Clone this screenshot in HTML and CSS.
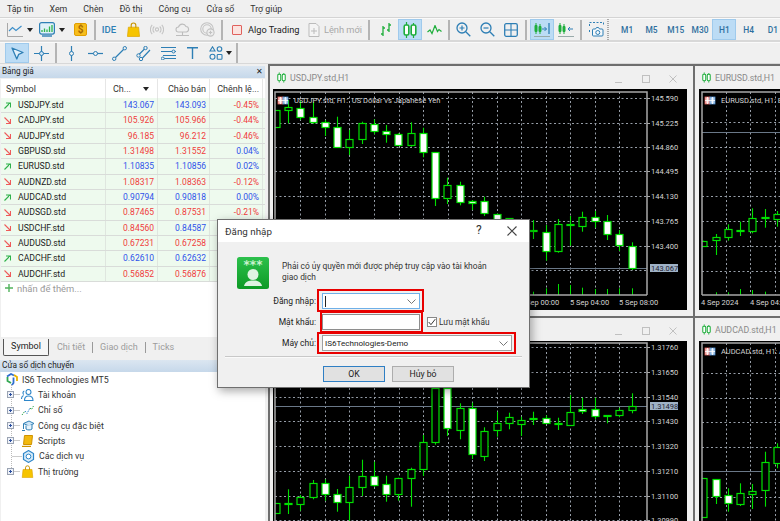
FILE: index.html
```html
<!doctype html>
<html lang="vi">
<head>
    <meta charset="utf-8">
    <title>MetaTrader 5</title>
    <link rel="stylesheet" href="styles.css">
</head>
<body>
    <svg class="defs" width="0" height="0">
        <symbol id="candles" viewBox="0 0 14 16">
            <path d="M3.5 0v16M10.5 1v15" stroke="#1fae3c" stroke-width="1.2"/>
            <rect x="1.2" y="3" width="4.6" height="10" rx="1.5" fill="#fff" stroke="#1fae3c" stroke-width="1.6"/>
            <rect x="8.2" y="3" width="4.6" height="10" rx="1.5" fill="#fff" stroke="#1fae3c" stroke-width="1.6"/>
        </symbol>
        <symbol id="bag" viewBox="0 0 14 16">
            <path d="M1.5 5.5h11l1 10H.5z" fill="#f6c400" stroke="#dfa600" stroke-width=".8"/>
            <path d="M4.5 6V3.5a2.5 2.5 0 0 1 5 0V6" fill="none" stroke="#c79300" stroke-width="1.2"/>
        </symbol>
        <symbol id="expand" viewBox="0 0 7 7">
            <rect x=".5" y=".5" width="6" height="6" fill="#eef2fa" stroke="#9aa3b2"/>
            <path d="M2 3.5h3M3.5 2v3" stroke="#2b4f9e"/>
        </symbol>
    </svg>

    <!-- thanh menu -->
    <nav class="menu">
        <span>Tập tin</span><span>Xem</span><span>Chèn</span><span>Đồ thị</span><span>Công cụ</span><span>Cửa sổ</span><span>Trợ giúp</span>
    </nav>

    <!-- thanh công cụ 1 -->
    <div class="toolbar">
        <span class="tb w20 first"><svg width="16" height="14" viewBox="0 0 16 14"><path d="M.5 0v13.5H16" fill="none" stroke="#a8a8a8"/><path d="M2 8l3.500-3.500 3.500 3 5.500-4.500" fill="none" stroke="#3d8fca" stroke-width="1.200"/></svg></span>
        <span class="tb w10"><i class="caret"></i></span>
        <span class="tb w20 gap2"><svg width="16" height="15" viewBox="0 0 16 15"><rect x=".6" y=".6" width="14.800" height="11.500" rx="2" fill="#dff0f8" stroke="#2e7fb5" stroke-width="1.200"/><path d="M3 10V8M5.500 10V6.500M8 10V7.500M10.500 10V4.500M13 10V3" stroke="#2fb44a" stroke-width="1.300"/><path d="M3 14h10" stroke="#2e7fb5" stroke-width="1.400"/></svg></span>
        <span class="tb w10"><i class="caret"></i></span>
        <span class="tb w24 gap1"><svg width="13" height="13" viewBox="0 0 13 13"><rect x=".5" y=".5" width="12" height="12" rx="1.500" fill="#f7bd1c" stroke="#e19f00"/><text x="6.500" y="10" class="dollar">$</text></svg></span>
        <i class="sep"></i>
        <span class="tb w24 ide">IDE</span>
        <span class="tb w24"><svg width="13" height="15"><use href="#bag"/></svg></span>
        <span class="tb w24"><svg width="14" height="11" viewBox="0 0 14 11"><g fill="none" stroke="#c4c4c4" stroke-width="1.100"><circle cx="7" cy="5.500" r="1.600"/><path d="M4.300 2.500a4 4 0 0 0 0 6M9.700 2.500a4 4 0 0 1 0 6M2.200.8a7 7 0 0 0 0 9.400M11.800.8a7 7 0 0 1 0 9.400"/></g></svg></span>
        <span class="tb w24 gap1"><svg width="15" height="14" viewBox="0 0 15 14"><g fill="none" stroke="#bdbdbd" stroke-width="1.100"><path d="M3.500 9a2.500 2.500 0 0 1 0-5A4 4 0 0 1 11 3.500 2.800 2.800 0 0 1 11.500 9z"/><path d="M7.500 9v3M1 12.500h13"/></g></svg></span>
        <span class="tb w24 gap1"><svg width="15" height="15" viewBox="0 0 15 15"><g fill="none" stroke="#c2c2c2" stroke-width="1.100"><circle cx="7" cy="7" r="6.300"/><circle cx="7" cy="7" r="4.200"/><circle cx="10.500" cy="10.500" r="3.600" fill="#ededed"/><path d="M10.500 8.800v3.400M8.800 10.500h3.400"/></g></svg></span>
        <i class="sep"></i>
        <span class="tb algo"><i class="algo-box"></i>Algo Trading</span>
        <span class="tb neworder"><svg width="12" height="14" viewBox="0 0 12 14"><path d="M1 .5h7l3 3v10H1z" fill="#f4f4f4" stroke="#bbb"/><path d="M6 5v6M3 8h6" stroke="#bbb"/></svg>Lệnh mới</span>
        <i class="sep"></i>
        <span class="tb w24 push3"><svg width="12" height="15" viewBox="0 0 12 15"><path d="M3 4v10M1 12h2M3 6h2M9 1v9M7 8h2M9 3h2" fill="none" stroke="#1fae3c" stroke-width="1.300"/></svg></span>
        <span class="tb w24 active"><svg width="14" height="16"><use href="#candles"/></svg></span>
        <span class="tb w24"><svg width="15" height="10" viewBox="0 0 15 10"><path d="M.5 7l2.500-2 2 3.500 3-8 2.500 6 1.500-2 2.500 2" fill="none" stroke="#1fae3c" stroke-width="1.200"/></svg></span>
        <i class="sep"></i>
        <span class="tb w24"><svg width="15" height="15" viewBox="0 0 15 15"><g fill="none" stroke="#2e7fb5"><circle cx="6" cy="6" r="5" stroke-width="1.300"/><path d="M9.800 9.800l4.500 4.500" stroke-width="1.300"/><path d="M6 3.500v5M3.500 6h5" stroke-width="1.200"/></g></svg></span>
        <span class="tb w24"><svg width="15" height="15" viewBox="0 0 15 15"><g fill="none" stroke="#2e7fb5"><circle cx="6" cy="6" r="5" stroke-width="1.300"/><path d="M9.800 9.800l4.500 4.500" stroke-width="1.300"/><path d="M3.500 6h5" stroke-width="1.200"/></g></svg></span>
        <span class="tb w24"><svg width="14" height="14" viewBox="0 0 14 14"><rect x=".7" y=".7" width="12.600" height="12.600" rx="1.500" fill="none" stroke="#2e7fb5" stroke-width="1.300"/><path d="M7 1v12M1 7h12" stroke="#2e7fb5" stroke-width="1.100"/></svg></span>
        <i class="sep"></i>
        <span class="tb w24 active gap2"><svg width="16" height="15" viewBox="0 0 16 15"><path d="M2 1v11M6 2v10" stroke="#1fae3c"/><path d="M1 3.500h2v6H1zM5 4.500h2v5H5z" fill="#1fae3c" stroke="#1fae3c"/><path d="M8 7h4.500M10.500 5l2 2-2 2" fill="none" stroke="#2e7fb5"/><path d="M15 1v11" stroke="#2e7fb5" stroke-width="1.300"/><path d="M0 14.500h16" stroke="#9aa"/></svg></span>
        <span class="tb w24"><svg width="16" height="15" viewBox="0 0 16 15"><path d="M2 1v11M6 2v10" stroke="#1fae3c"/><path d="M1 3.500h2v6H1zM5 4.500h2v5H5z" fill="#1fae3c" stroke="#1fae3c"/><path d="M15 7h-5M12 5l-2 2 2 2" fill="none" stroke="#2e7fb5"/><path d="M0 14.500h16" stroke="#9aa"/></svg></span>
        <i class="sep"></i>
        <span class="tb w24 gap1"><svg width="15" height="15" viewBox="0 0 15 15"><path d="M.5 4V.5h14V4M.5 8v3" fill="none" stroke="#2e7fb5" stroke-dasharray="2 1.500"/><path d="M4.500 7h2l1-1.500h2L10.500 7h2.500a1 1 0 0 1 1 1v5a1 1 0 0 1-1 1H4.500a1 1 0 0 1-1-1V8a1 1 0 0 1 1-1z" fill="#f4f8fb" stroke="#2e7fb5"/><circle cx="8.800" cy="10.500" r="2" fill="none" stroke="#2e7fb5"/></svg></span>
        <i class="grip"></i>
        <span class="tb tf first-tf">M1</span>
        <span class="tb tf">M5</span>
        <span class="tb tf">M15</span>
        <span class="tb tf">M30</span>
        <span class="tb tf active">H1</span>
        <span class="tb tf">H4</span>
        <span class="tb tf">D1</span>
    </div>

    <!-- thanh công cụ 2 -->
    <div class="toolbar short">
        <span class="tb w24 active first-draw"><svg width="13" height="13" viewBox="0 0 13 13"><path d="M1 1l11 4.500-4.300 1.800L5.800 12z" fill="#e3f0fa" stroke="#2e7fb5" stroke-width="1.300" stroke-linejoin="round"/></svg></span>
        <span class="tb w24"><svg width="15" height="15" viewBox="0 0 15 15"><path d="M7.500 0v15M0 7.500h15" stroke="#2e7fb5" stroke-width="1.200"/><circle cx="7.500" cy="7.500" r="2" fill="#cfe3f3" stroke="#2e7fb5"/></svg></span>
        <i class="sep"></i>
        <span class="tb w24 gap1"><svg width="7" height="15" viewBox="0 0 7 15"><path d="M3.500 0v15" stroke="#2e7fb5" stroke-width="1.200"/><circle cx="3.500" cy="7.500" r="2" fill="#f0f0f0" stroke="#2e7fb5"/></svg></span>
        <span class="tb w24"><svg width="15" height="7" viewBox="0 0 15 7"><path d="M0 3.500h15" stroke="#2e7fb5" stroke-width="1.200"/><circle cx="7.500" cy="3.500" r="2" fill="#f0f0f0" stroke="#2e7fb5"/></svg></span>
        <span class="tb w24"><svg width="15" height="15" viewBox="0 0 15 15"><path d="M3 12L12 3" stroke="#2e7fb5" stroke-width="1.200"/><circle cx="2.200" cy="12.800" r="1.700" fill="#f0f0f0" stroke="#2e7fb5"/><circle cx="12.800" cy="2.200" r="1.700" fill="#f0f0f0" stroke="#2e7fb5"/></svg></span>
        <span class="tb w24"><svg width="15" height="15" viewBox="0 0 15 15"><path d="M3 8.500L9 2.500M6 12.500L14 4" stroke="#2e7fb5" stroke-width="1.200"/><circle cx="2.500" cy="9.500" r="1.700" fill="#f0f0f0" stroke="#2e7fb5"/><circle cx="9.500" cy="2" r="1.700" fill="#f0f0f0" stroke="#2e7fb5"/><circle cx="5" cy="13" r="1.700" fill="#f0f0f0" stroke="#2e7fb5"/></svg></span>
        <span class="tb w24 gap1"><svg width="15" height="14" viewBox="0 0 15 14"><path d="M0 1.500h15M0 5.500h15M2 9.500h13M3 12.500h12" stroke="#2e7fb5" stroke-width="1.200"/><circle cx="12.500" cy="5.500" r="1.500" fill="#f0f0f0" stroke="#2e7fb5"/><circle cx="1.800" cy="12.500" r="1.500" fill="#f0f0f0" stroke="#2e7fb5"/></svg></span>
        <span class="tb w24"><svg width="11" height="12" viewBox="0 0 11 12"><path d="M0 .8h11M5.500 .8V12" stroke="#2e7fb5" stroke-width="1.400"/></svg></span>
        <span class="tb w24"><svg width="14" height="14" viewBox="0 0 14 14"><g fill="none" stroke="#2e7fb5" stroke-width="1.100"><path d="M3.500 .8L6 5H1z"/><circle cx="10.500" cy="3" r="2.300"/><circle cx="3.500" cy="10.700" r="2.500"/><rect x="8.200" y="8.500" width="4.800" height="4.800" rx=".8"/></g></svg></span>
        <span class="tb w10 narrow"><i class="caret"></i></span>
        <i class="sep"></i>
    </div>

    <div class="main">
        <!-- cột trái -->
        <aside class="side">
            <div class="pane-title">Bảng giá<span class="pane-close">✕</span></div>
            <div class="quotes">
                <div class="qhead">
                    <span>Symbol</span>
                    <span class="q-sort">Ch...<i class="caret"></i></span>
                    <span class="r">Chào bán</span>
                    <span class="r">Chênh lệ...</span>
                </div>
                <div id="quoteRows"></div>
                <div class="addrow"><svg width="10" height="10" viewBox="0 0 10 10"><path d="M5 1v8M1 5h8" stroke="#52b35c" stroke-width="1.400"/></svg>nhấn để thêm...</div>
            </div>
            <div class="tabs">
                <span class="tab on">Symbol</span>
                <span class="tab">Chi tiết</span>
                <span class="tab">Giao dịch</span>
                <span class="tab">Ticks</span>
            </div>
            <div class="pane-title nav-title">Cửa sổ dịch chuyển</div>
            <ul class="tree">
                <li class="root">
                    <svg width="12" height="13" viewBox="0 0 12 13"><path d="M1 3.500L5 1l3 1.500" fill="none" stroke="#2f6fd0" stroke-width="1.800"/><path d="M8 2l3 2v4" fill="none" stroke="#e8b400" stroke-width="1.800"/><path d="M1.500 4v4l3.500 2" fill="none" stroke="#33a852" stroke-width="1.800"/><path d="M7.500 4.500v5.500L6 12" fill="none" stroke="#2f6fd0" stroke-width="1.800"/></svg>
                    IS6 Technologies MT5
                </li>
                <li><svg class="exp" width="7" height="7"><use href="#expand"/></svg><i class="stub"></i>
                    <svg width="13" height="12" viewBox="0 0 13 12"><g fill="none" stroke="#2e86c9" stroke-width="1.100"><circle cx="7.500" cy="3" r="2.500"/><path d="M3.500 11.500c0-3 1.500-4.500 4-4.500s4.500 1.500 4.500 4.500z"/><path d="M3.300 2a2 2 0 0 0-.5 3.500M.5 10c0-2 .7-3 2-3.500"/></g></svg>
                    Tài khoản
                </li>
                <li><svg class="exp" width="7" height="7"><use href="#expand"/></svg><i class="stub"></i>
                    <svg width="13" height="11" viewBox="0 0 13 11"><path d="M1 10l3-4" stroke="#33a852" stroke-dasharray="1.500 1" fill="none"/><path d="M4 6l2 2.500L9 3" stroke="#2e86c9" stroke-dasharray="1.500 1" fill="none"/><path d="M9 3l1.500 1.500L12.500 1" stroke="#33a852" stroke-dasharray="1.500 1" fill="none"/></svg>
                    Chỉ số
                </li>
                <li><svg class="exp" width="7" height="7"><use href="#expand"/></svg><i class="stub"></i>
                    <svg width="13" height="12" viewBox="0 0 13 12"><path d="M2.500 3.500L8 1l5 2.500L8 6z" fill="#cfe6f7" stroke="#2e7fb5"/><path d="M5 5.500v3.500c1.500 1.300 4.500 1.300 6 0V5" fill="#e8f3fb" stroke="#2e7fb5"/><path d="M2.500 4v5M1 10.500h3" stroke="#2e7fb5"/></svg>
                    Công cụ đặc biệt
                </li>
                <li><svg class="exp" width="7" height="7"><use href="#expand"/></svg><i class="stub"></i>
                    <svg width="12" height="12" viewBox="0 0 12 12"><path d="M3 .5h8l-1 9H2z" fill="#f2b90f" stroke="#cf9200"/><path d="M.5 11.500h9" stroke="#cf9200" stroke-width="1.400"/></svg>
                    Scripts
                </li>
                <li><i class="stub long"></i>
                    <svg width="12" height="13" viewBox="0 0 12 13"><path d="M6 .6l5 2.900v6L6 12.400 1 9.500v-6z" fill="#d9ecf9" stroke="#2e86c9" stroke-width="1.200"/><circle cx="6" cy="6.500" r="2.400" fill="#fff" stroke="#2e86c9"/></svg>
                    Các dịch vụ
                </li>
                <li><svg class="exp" width="7" height="7"><use href="#expand"/></svg><i class="stub"></i>
                    <svg width="11" height="13"><use href="#bag"/></svg>
                    Thị trường
                </li>
            </ul>
        </aside>

        <!-- khu vực các cửa sổ đồ thị -->
        <section class="mdi">
            <div class="win win-a">
                <div class="win-title"><svg width="9" height="11"><use href="#candles"/></svg><span>USDJPY.std,H1</span><span class="win-btns"><i class="b-min"></i><i class="b-max"></i><svg width="8" height="8" viewBox="0 0 8 8"><path d="M.5 .5l7 7M7.500 .5l-7 7" stroke="#c0c0c0"/></svg></span></div>
                <svg class="chart" id="chartUsd" width="414" height="221" viewBox="273 89 414 221"></svg>
            </div>
            <div class="win win-b">
                <div class="win-title"><svg width="9" height="11"><use href="#candles"/></svg><span>EURUSD.std,H1</span></div>
                <svg class="chart" id="chartEur" width="81" height="221" viewBox="699 89 81 221"></svg>
            </div>
            <div class="win win-c">
                <div class="win-title"><svg width="9" height="11"><use href="#candles"/></svg><span>GBPUSD.std,H1</span><span class="win-btns"><i class="b-min"></i><i class="b-max"></i><svg width="8" height="8" viewBox="0 0 8 8"><path d="M.5 .5l7 7M7.500 .5l-7 7" stroke="#c0c0c0"/></svg></span></div>
                <svg class="chart" id="chartGbp" width="414" height="180" viewBox="273 341 414 180"></svg>
            </div>
            <div class="win win-d">
                <div class="win-title"><svg width="9" height="11"><use href="#candles"/></svg><span>AUDCAD.std,H1</span></div>
                <svg class="chart" id="chartCad" width="81" height="180" viewBox="699 341 81 180"></svg>
            </div>
        </section>
    </div>

    <!-- hộp thoại đăng nhập -->
    <div class="dialog">
        <div class="dlg-title">
            <span class="dlg-name">Đăng nhập</span>
            <span class="dlg-help">?</span>
            <svg class="dlg-x" width="10" height="10" viewBox="0 0 10 10"><path d="M.5 .5l9 9M9.500 .5l-9 9" stroke="#444" stroke-width="1.100"/></svg>
        </div>
        <div class="dlg-body">
            <div class="dlg-msg">
                <svg width="32" height="32" viewBox="0 0 32 32">
                    <defs><linearGradient id="gr" x1="0" y1="0" x2="0" y2="1"><stop offset="0" stop-color="#2cc04c"/><stop offset="1" stop-color="#0d9a25"/></linearGradient></defs>
                    <rect width="32" height="32" rx="2.500" fill="url(#gr)"/>
                    <text x="16" y="12" class="stars">***</text>
                    <circle cx="16" cy="17.500" r="5.500" fill="#dff3e2"/>
                    <path d="M7 29c1-4.500 5-5.500 9-5.500s8 1 9 5.500z" fill="#dff3e2"/>
                </svg>
                <p>Phải có ủy quyền mới được phép truy cập vào tài khoản giao dịch</p>
            </div>
            <div class="form">
                <label>Đăng nhập:</label>
                <div class="field focus login"><i class="cursor"></i><svg width="9" height="5" viewBox="0 0 9 5"><path d="M.5 .5l4 4 4-4" fill="none" stroke="#777"/></svg></div>
                <span></span>
                <label>Mật khẩu:</label>
                <div class="field pass"></div>
                <span class="save"><i class="check"><svg width="9" height="8" viewBox="0 0 9 8"><path d="M.8 4l2.500 3L8.200 .8" fill="none" stroke="#333" stroke-width="1.100"/></svg></i>Lưu mật khẩu</span>
                <label>Máy chủ:</label>
                <div class="field server">IS6Technologies-Demo<svg width="9" height="5" viewBox="0 0 9 5"><path d="M.5 .5l4 4 4-4" fill="none" stroke="#777"/></svg></div>
            </div>
            <div class="dlg-line"></div>
            <div class="dlg-btns">
                <button class="btn ok">OK</button>
                <button class="btn">Hủy bỏ</button>
            </div>
        </div>
        <i class="mark mark-login"></i>
        <i class="mark mark-pass"></i>
        <i class="mark mark-server"></i>
    </div>

    <script src="charts.js"></script>
</body>
</html>
```

FILE: styles.css
```css
*{margin: 0;padding: 0;box-sizing: border-box;list-style: none;}
html,body{width: 780px;height: 521px;overflow: hidden;}
body{background: #f0f0f0;font-family: Roboto,"Open Sans",sans-serif;font-size: 8.8px;color: #333;position: relative;display: flex;flex-direction: column;}
i{font-style: normal;display: block;}
.defs{position: absolute;}

.menu{height: 18px;display: flex;gap: 16px;padding-left: 7px;align-items: center;border-bottom: 1px solid #d4d4d4;color: #333;flex: none;font-size: 8.800px;}

.toolbar{height: 24px;display: flex;align-items: center;border-bottom: 2px solid #d8d8d8;border-top: 1px solid #fafafa;flex: none;overflow: hidden;}
.toolbar.short{height: 22px;border-bottom: 1px solid #d8d8d8;}
.tb{display: flex;align-items: center;justify-content: center;height: 21px;flex: none;border: 1px solid transparent;white-space: nowrap;}
.short .tb{height: 20px;}
.w24{width: 24px;}
.w20{width: 20px;}
.w10{width: 10px;}
.first{margin-left: 5px;}
.first-draw{margin-left: 5px;}
.gap1{margin-left: 1px;}
.gap2{margin-left: 2px;}
.push3{margin-left: 3px;}
.narrow{margin-left: -4px;}
.active{background: #bcdcf5;border-color: #9fcaec;}
.caret{width: 0;height: 0;border-left: 3.5px solid transparent;border-right: 3.5px solid transparent;border-top: 4px solid #222;}
.sep{width: 2px;height: 20px;background: #b4b4b4;margin: 0 1.500px;flex: none;}
.ide{color: #2e7fb5;font-size: 9.500px;font-weight: 500;}
.dollar{font-size: 10px;font-weight: 700;fill: #a86a00;text-anchor: middle;font-family: Roboto,sans-serif;}
.algo{width: 72px;margin-left: 5px;justify-content: flex-start;gap: 6px;color: #222;font-size: 9.200px;}
.algo-box{width: 10px;height: 10px;border: 1.500px solid #e0605c;background: #fbe3df;border-radius: 1px;margin-left: 2px;}
.neworder{width: 62px;margin-left: 3px;gap: 4px;color: #a8a8a8;font-size: 9.300px;}
.grip{width: 2px;height: 22px;margin-left: -1px;background: repeating-linear-gradient(#aaa 0 1px,transparent 1px 2px);flex: none;}
.tf{width: 24.300px;color: #2e6f9e;font-size: 8.400px;font-weight: 500;}
.first-tf{margin-left: 6px;}

.main{flex: 1;display: flex;min-height: 0;}

.side{width: 268px;flex: none;display: flex;flex-direction: column;padding: 2px 0 0;background: #f0f0f0;}
.pane-title{height: 12px;line-height: 11px;padding-left: 2px;background: linear-gradient(#dbe6f1,#c6d8ea);color: #222;position: relative;margin-right: 3px;font-size: 8.200px;flex: none;}
.pane-close{position: absolute;right: 2px;top: 0;font-size: 8px;color: #222;}
.quotes{height: 258px;background: #fff;margin: 1px 3px 0 1px;flex: none;}
.qhead{display: grid;grid-template-columns: 105px 52px 52px 53px;height: 19px;align-items: center;color: #333;font-size: 9px;}
.qhead span{padding: 0 3px 0 5px;border-right: 1px solid #e6e6e6;height: 100%;display: flex;align-items: center;white-space: nowrap;}
.qhead .r{justify-content: flex-end;}
.q-sort{justify-content: space-between;padding-right: 8px !important;padding-left: 7px !important;}
.qrow{display: grid;grid-template-columns: 105px 52px 52px 53px;height: 15.330px;align-items: center;background: #eefaee;border-bottom: 1px solid #d9dcd9;font-size: 8.500px;}
.qrow span{text-align: right;padding-right: 3px;border-right: 1px solid #dfe6df;height: 100%;line-height: 14px;}
.qrow .sym{text-align: left;padding-left: 3px;display: flex;align-items: center;gap: 7px;color: #222;font-size: 8.700px;}
.blue{color: #2f52ea;}
.red{color: #f03c3c;}
.addrow{display: flex;align-items: center;gap: 3px;padding: 1px 0 0 3px;color: #9a9a9a;font-size: 9.400px;}

.tabs{display: flex;align-items: center;height: 17px;margin: 2px 0 0 3px;color: #9c9c9c;flex: none;font-size: 9px;}
.tab{padding: 0 7px;border-right: 1px solid #9a9a9a;line-height: 11px;}
.tab:last-child{border-right: 0;}
.tab.on{height: 17px;line-height: 15px;width: 46px;padding: 0;text-align: center;color: #222;background: #f6f6f6;border: 1px solid #555;border-top: 0;border-radius: 0 0 2px 2px;margin-right: 1px;}
.nav-title{margin-top: 4px;height: 12px;font-size: 8.300px;}

.tree{flex: 1;background: #fff;margin: 0 3px 0 1px;font-size: 8.800px;position: relative;color: #333;}
.tree::before{content: '';position: absolute;left: 10px;top: 12px;height: 90px;border-left: 1px dotted #bbb;}
.tree li{height: 15.330px;display: flex;align-items: center;position: relative;}
.tree .root{padding-left: 5px;}
.exp{margin-left: 6px;flex: none;position: relative;background: #fff;}
.stub{width: 6px;height: 1px;background: #ccc;margin-right: 1px;flex: none;}
.stub.long{width: 10px;margin-left: 11px;margin-right: 0;}
.tree li>svg:not(.exp){margin-right: 4px;flex: none;}
.tree li:nth-child(n+2)>svg:not(.exp){width: 13px;}

.mdi{flex: 1;position: relative;background: #6e6e6e;border-top: 2px solid #6e6e6e;overflow: hidden;}
.win{position: absolute;background: #f0f0f0;overflow: hidden;}
.win-a{left: 2px;top: 0;width: 423px;height: 250px;}
.win-b{left: 427px;top: 0;width: 90px;height: 250px;}
.win-c{left: 2px;top: 252px;width: 423px;height: 210px;}
.win-d{left: 427px;top: 252px;width: 90px;height: 210px;}
.win-title{height: 23px;display: flex;align-items: center;padding-left: 7px;gap: 4px;color: #8a8a8a;font-size: 8.800px;position: relative;}
.win-title>svg{flex: none;}
.win-b .win-title,.win-d .win-title{padding-left: 7px;white-space: nowrap;}
.win-btns{position: absolute;left: 345px;top: 8px;width: 62px;height: 9px;display: flex;justify-content: space-between;align-items: center;}
.b-min{width: 7px;height: 1px;background: #c0c0c0;margin-top: 7px;}
.b-max{width: 8px;height: 8px;border: 1px solid #c0c0c0;}
.chart{display: block;margin-left: 3px;background: #000;}
.win-b .chart,.win-d .chart{margin-left: 4px;}
.chart text{font-family: Roboto,"Open Sans",sans-serif;font-size: 7.500px;fill: #d4d4d4;}

.dialog{position: absolute;left: 217px;top: 219px;width: 313px;height: 169px;background: #f0f0f0;border: 1px solid #6f6f6f;box-shadow: 2px 3px 9px rgba(0,0,0,.35);z-index: 5;}
.dlg-title{height: 22px;background: #fff;display: flex;align-items: center;padding-left: 7px;position: relative;}
.dlg-name{font-size: 9.800px;color: #333;}
.dlg-help{position: absolute;left: 258px;top: 3px;font-size: 12px;color: #333;}
.dlg-x{position: absolute;left: 289px;top: 6px;}
.dlg-body{padding: 15px 6px 0;}
.dlg-msg{display: flex;gap: 13px;padding-left: 13px;height: 32px;}
.dlg-msg p{width: 215px;font-size: 8.400px;line-height: 11px;padding-top: 4px;color: #333;}
.stars{font-size: 12px;font-weight: 700;fill: #c9f2cf;text-anchor: middle;font-family: "DejaVu Sans",sans-serif;}
.form{display: grid;grid-template-columns: 92px 98px auto;gap: 5px 6px;margin-top: 4px;align-items: center;font-size: 8.500px;}
.form label{text-align: right;color: #222;}
.field{height: 16px;background: #fff;border: 1px solid #a0a0a0;display: flex;align-items: center;justify-content: space-between;padding: 0 3px 0 2px;color: #222;}
.field.focus{border-color: #6fb0e8;}
.field.pass{border-width: 1.500px;border-color: #8e8e8e;}
.field.server{grid-column: 2 / 4;width: 190px;font-size: 8.100px;}
.cursor{width: 1px;height: 11px;background: #222;}
.save{display: flex;align-items: center;gap: 2px;margin-left: 1px;white-space: nowrap;font-size: 8.300px;}
.check{width: 10px;height: 10px;background: #fff;border: 1px solid #888;display: flex;align-items: center;justify-content: center;}
.dlg-line{height: 2px;margin: 5px 1px 0 1px;background: #c8c8c8;border-bottom: 1px solid #fafafa;}
.dlg-btns{display: flex;gap: 7px;margin: 8px 0 0 99px;}
.btn{width: 62px;height: 16px;background: #e1e1e1;border: 1px solid #adadad;font: 8.700px Roboto,sans-serif;color: #222;}
.btn.ok{border: 1.500px solid #2f7fc4;}
.mark{position: absolute;border: 2px solid #e80000;}
.mark-login{left: 99px;top: 69px;width: 107px;height: 23px;}
.mark-pass{left: 102px;top: 91px;width: 103px;height: 22px;}
.mark-server{left: 99px;top: 112px;width: 199px;height: 22px;}
```

FILE: charts.js
```js
// bảng giá
var quotes = [
    ['USDJPY.std', 1, '143.067', 'b', '143.093', 'b', '-0.45%', 'r'],
    ['CADJPY.std', 0, '105.926', 'r', '105.966', 'r', '-0.44%', 'r'],
    ['AUDJPY.std', 0, '96.185', 'r', '96.212', 'r', '-0.46%', 'r'],
    ['GBPUSD.std', 0, '1.31498', 'r', '1.31552', 'r', '0.04%', 'b'],
    ['EURUSD.std', 1, '1.10835', 'b', '1.10856', 'b', '0.02%', 'b'],
    ['AUDNZD.std', 0, '1.08317', 'r', '1.08363', 'r', '-0.12%', 'r'],
    ['AUDCAD.std', 1, '0.90794', 'b', '0.90818', 'b', '0.00%', 'b'],
    ['AUDSGD.std', 0, '0.87465', 'r', '0.87531', 'r', '-0.21%', 'r'],
    ['USDCHF.std', 0, '0.84560', 'r', '0.84587', 'b', '-0.35%', 'r'],
    ['AUDUSD.std', 0, '0.67231', 'r', '0.67258', 'r', '-0.27%', 'r'],
    ['CADCHF.std', 1, '0.62610', 'b', '0.62632', 'b', '0.01%', 'b'],
    ['AUDCHF.std', 0, '0.56852', 'r', '0.56876', 'r', '-0.29%', 'r']
];

function cls(c){
    return c == 'b' ? 'blue' : 'red';
}

var rowsHtml = '';
quotes.forEach(function(q){
    var arrow = q[1]
        ? '<svg width="7" height="7" viewBox="0 0 7 7"><path d="M.5 6.500L6 1M2 1h4.500v4.500" fill="none" stroke="#2fb14a" stroke-width="1.100"/></svg>'
        : '<svg width="7" height="7" viewBox="0 0 7 7"><path d="M.5 .5L6 6M6.500 2v4.500H2" fill="none" stroke="#ee5a5a" stroke-width="1.100"/></svg>';
    rowsHtml += '<div class="qrow"><span class="sym">' + arrow + q[0] + '</span>'
        + '<span class="' + cls(q[3]) + '">' + q[2] + '</span>'
        + '<span class="' + cls(q[5]) + '">' + q[4] + '</span>'
        + '<span class="' + cls(q[7]) + '">' + q[6] + '</span></div>';
});
document.getElementById('quoteRows').innerHTML = rowsHtml;

// mỗi nến: [thân trên, thân dưới, râu trên, râu dưới, 1 = nến trắng]; null = nến bị hộp thoại che
var usd = [
    [110,127,110,127,0],[107.3,110.3,100,123.3,0],[107.7,117,101,120,1],[116.7,121.7,101.7,124,1],
    [121.7,126.7,120,136,1],[127,146.7,116.7,146.7,1],[139,146.7,130,155,0],[123.3,139,121.7,144,0],
    [124,130.7,119.3,134.3,1],[130.7,133.7,125,142.7,1],[134,145.3,133.3,146,1],[133,145.3,122.3,146.7,0],
    [133,152.3,127.7,157.3,1],[152.3,198.3,152.3,206,1],[185.3,198.3,177.7,204,0],[185.3,202.7,181.7,205.3,1],
    [201,203,200,210,1],[201.3,213.3,196.7,216,1],[213.7,223.3,213.7,225,1],[218.3,225,218.3,228,1],null,
    [229.7,231,220,239,1],[231.7,250.3,225,260.7,1],[224.3,251.7,219,252.7,0],[224.3,225.3,216,245.7,1],
    [216.7,225.3,211.7,231.7,0],[216.7,221,211,227.7,1],[221.3,234.3,215,240,1],[234.3,245.7,230,251,1],
    [245.7,268,242.3,270,1]
];
var gbp = [
    [503.3,513.3,503.3,513.3,0],[503.3,504,489.3,514,1],[496.7,503.7,495,510.7,0],[482.7,496.7,480,499.3,0],
    [483.3,494.3,479.3,500.7,1],[494.3,502.7,489,511.7,1],[486.7,502,475.7,521,0],[475.7,486.7,459.7,496,0],
    [475.7,484.3,461.7,486.7,1],[484.3,494.3,475.7,501.7,1],[478.3,494.7,477.7,500.7,0],[469,477.7,467.7,506.7,0],
    [442.3,469.3,435,476,0],[388.3,442.3,388,444.7,0],[388.3,428.3,388,436,1],[407.7,429.3,403.3,439.3,0],
    [408.3,454.3,402.7,459,1],[430.7,455.3,427.3,461,0],[423,430.3,411.7,436.7,0],[416.7,423,412.7,429.3,0],
    [419.7,423.3,416.7,436,0],[418.3,419.3,411.7,425,1],[417.7,423,415.3,424,1],[423,423.7,417.7,430,1],
    [411.7,424.3,395,425,0],[409.3,411.3,397.7,414,1],[409.3,416,397.7,419,1],[415,415.7,415,423.3,1],
    [410,415.3,407.7,417.3,0],[406.3,410,393.3,413.3,0]
];
var eur = [
    [240.7,246,240.7,246,0],[237.3,240.3,234,255,0],[229.3,237.7,224.3,240.7,0],[230.3,231.3,221.7,236,1],
    [217.7,230.7,208.3,233.3,0],[216.7,218,209,227.7,1],[214.3,219,211,226.7,0]
];
var cad = [
    [478.3,517.3,478.3,517.3,0],[479.3,496,479.3,504,1],[495.3,503.7,488.3,511.7,1],[492.7,504,483.3,506,0],
    [490.7,493.3,484,509,0],[462.3,490.7,451.7,506.7,0],[446.7,462.3,443.3,468.3,0]
];

function drawChart(id, o){
    var s = '', i;
    var grey = '#979ea8', lime = '#00e000';
    s += '<defs><clipPath id="' + id + 'Clip"><rect x="' + o.left + '" y="' + o.top + '" width="' + (o.right - o.left) + '" height="' + (o.bottom - o.top) + '"/></clipPath></defs>';

    // lưới
    o.gridY.forEach(function(y){
        y = Math.round(y) + .5;
        s += '<path d="M' + o.left + ' ' + y + 'H' + o.right + '" stroke="' + grey + '" stroke-dasharray="2 2.500"/>';
    });
    for(i = 0; i < o.gridN; i++){
        var gx = Math.round(o.gridX + i * 24.55) + .5;
        s += '<path d="M' + gx + ' ' + o.top + 'V' + o.bottom + '" stroke="' + grey + '" stroke-dasharray="2 2.500"/>';
    }
    // đường giá
    s += '<path d="M' + o.left + ' ' + (Math.round(o.ask) + .5) + 'H' + o.right + '" stroke="#6a7888"/>';

    // nến
    s += '<g clip-path="url(#' + id + 'Clip)">';
    o.data.forEach(function(c, n){
        if(!c){
            return;
        }
        var x = Math.round(o.x0 + n * 12.27) + .5;
        s += '<path d="M' + x + ' ' + c[2] + 'V' + c[3] + '" stroke="' + lime + '" stroke-width="1.100"/>';
        s += '<rect x="' + (x - 3.5) + '" y="' + (Math.round(c[0]) + .5) + '" width="7" height="' + Math.max(1, Math.round(c[1] - c[0])) + '" fill="' + (c[4] ? '#fff' : '#000') + '" stroke="' + lime + '" stroke-width="1.200"/>';
    });
    (o.vol || []).forEach(function(v){
        var x = Math.round(o.x0 + v[0] * 12.27) + .5;
        s += '<path d="M' + x + ' ' + v[1] + 'V' + o.bottom + '" stroke="' + lime + '"/>';
    });
    s += '</g>';

    // khung
    s += '<path d="M' + o.left + ' ' + (o.bottom > 400 && o.top > 300 ? 521 : o.bottom) + 'V' + o.top + 'H' + o.right + (o.prices ? 'V' + o.bottom : '') + '" fill="none" stroke="#a8a8a8" stroke-width="1.500"/>';
    if(o.bottom < 400){
        s += '<path d="M' + o.left + ' ' + o.bottom + 'H' + o.right + '" stroke="#a8a8a8" stroke-width="1.500"/>';
    }

    // tên đồ thị + biểu tượng
    var ix = o.left + 3, iy = o.top + 5;
    s += '<rect x="' + ix + '" y="' + iy + '" width="5" height="7" fill="#f7c4c0" stroke="#e0605c" stroke-width=".8"/>';
    s += '<rect x="' + (ix + 5) + '" y="' + iy + '" width="5" height="7" fill="#b9d4f0" stroke="#4f8fd0" stroke-width=".8"/>';
    s += '<path d="M' + ix + ' ' + (iy + 3.5) + 'h10M' + (ix + 2.5) + ' ' + iy + 'v7M' + (ix + 7.5) + ' ' + iy + 'v7" stroke="#fff" stroke-width=".8"/>';
    s += '<text x="' + (o.left + 19) + '" y="' + (o.top + 11) + '">' + o.label + '</text>';

    // nhãn giá
    (o.prices || []).forEach(function(p){
        s += '<path d="M' + o.right + ' ' + (Math.round(p[1]) + .5) + 'h3" stroke="#a8a8a8"/>';
        s += '<text x="' + (o.right + 4) + '" y="' + (p[1] + 3) + '">' + p[0] + '</text>';
    });
    if(o.priceBox){
        var b = o.priceBox;
        s += '<rect x="' + (o.right + 3) + '" y="' + (b[1] - 4) + '" width="28" height="8" fill="#9fb2c6"/>';
        s += '<text x="' + (o.right + 4) + '" y="' + (b[1] + 3) + '" style="fill:#223">' + b[0] + '</text>';
    }
    (o.dates || []).forEach(function(d){
        s += '<text x="' + d[1] + '" y="305">' + d[0] + '</text>';
    });
    document.getElementById(id).innerHTML = s;
}

drawChart('chartUsd', {
    left: 275, top: 92, right: 647, bottom: 295, x0: 275.7, gridX: 300.3, gridN: 14, ask: 267.7, data: usd,
    gridY: [98, 122.5, 147, 171, 196, 221, 245.5, 270],
    label: 'USDJPY.std, H1:&#160; US Dollar vs Japanese Yen',
    vol: [[21, 291.7], [22, 288.3], [23, 284], [24, 285], [25, 287.7], [26, 289], [27, 289], [28, 288.3], [29, 288.3]],
    prices: [['145.590', 98], ['145.225', 122.5], ['144.860', 147], ['144.495', 171], ['144.130', 196], ['143.765', 221], ['143.400', 245.5]],
    priceBox: ['143.067', 268],
    dates: [['5 Sep 00:00', 520], ['5 Sep 04:00', 570], ['5 Sep 08:00', 619]]
});
drawChart('chartGbp', {
    left: 275, top: 343, right: 647, bottom: 521, x0: 275.7, gridX: 300.3, gridN: 14, ask: 406, data: gbp,
    gridY: [347, 372, 397, 421, 446, 471, 496, 520],
    label: 'GBPUSD.std, H1',
    prices: [['1.31760', 347], ['1.31650', 372], ['1.31540', 397], ['1.31430', 421], ['1.31320', 446], ['1.31210', 471], ['1.31100', 496], ['1.30990', 520]],
    priceBox: ['1.31498', 406]
});
drawChart('chartEur', {
    left: 702, top: 92, right: 780, bottom: 295, x0: 703.3, gridX: 725.7, gridN: 3, ask: 131.7, data: eur,
    gridY: [122, 147, 171, 196, 221, 246, 271],
    label: 'EURUSD.std, H1: Euro vs US Dollar',
    vol: [[1, 292.3], [2, 292.3], [3, 289], [4, 290], [5, 291.7]],
    dates: [['4 Sep 2024', 701], ['4 Sep 04:00', 750]]
});
drawChart('chartCad', {
    left: 702, top: 343, right: 780, bottom: 521, x0: 703.3, gridX: 725.7, gridN: 3, ask: 471, data: cad,
    gridY: [373.3, 397.7, 422.3, 446.7, 496.7],
    label: 'AUDCAD.std, H1: Australian Dollar'
});
```
